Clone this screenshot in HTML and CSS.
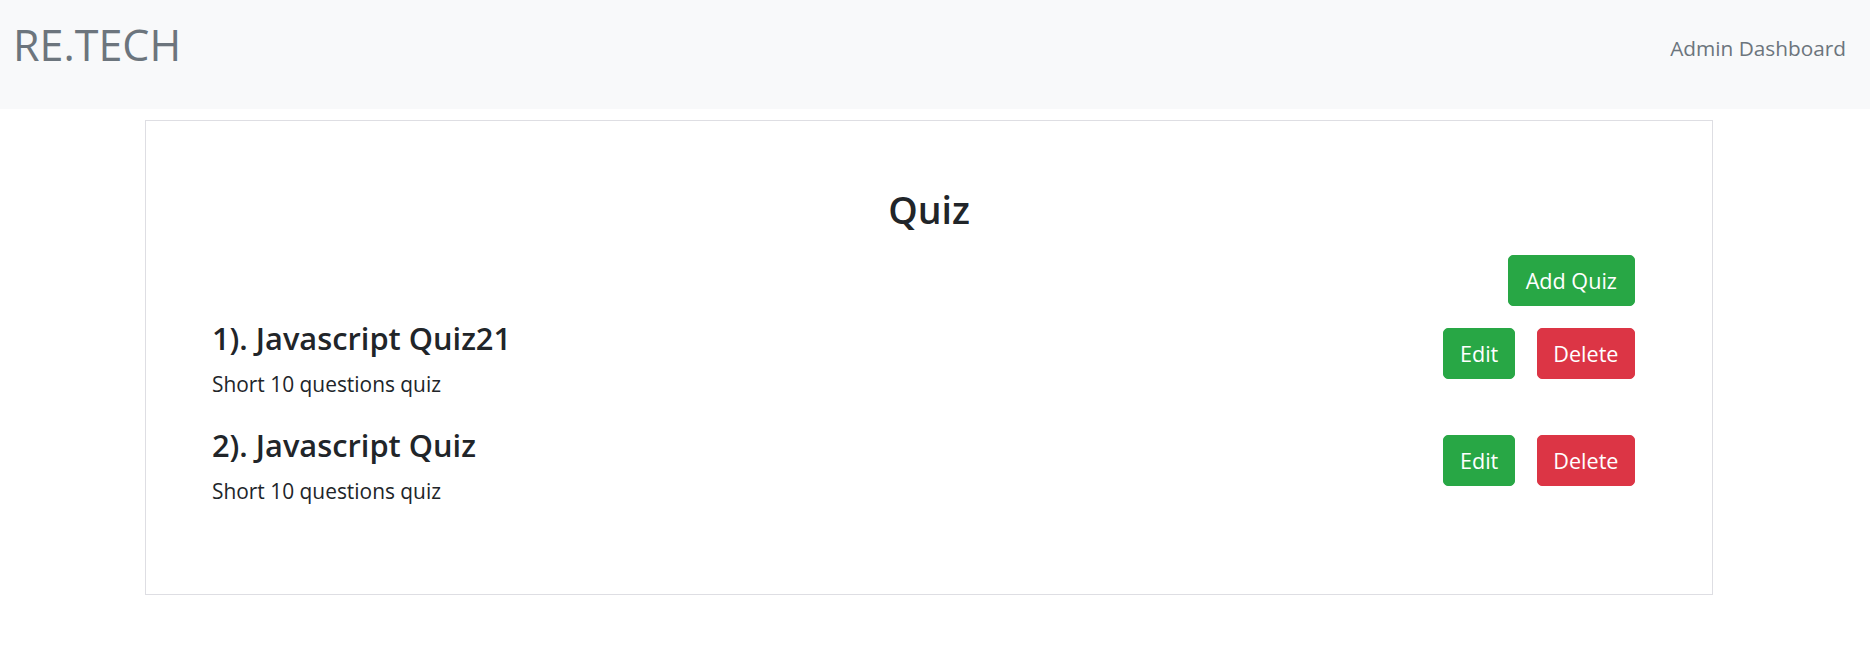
FILE: index.html
```html
<!DOCTYPE html>
<html lang="en">
<head>
<meta charset="utf-8">
<title>RE.TECH - Quiz</title>
<link rel="stylesheet" href="styles.css">
</head>
<body>
<nav class="navbar">
  <a class="brand" href="#">RE.TECH</a>
  <a class="nav-link" href="#">Admin Dashboard</a>
</nav>
<main class="page">
  <section class="card">
    <h2 class="card-title">Quiz</h2>
    <div class="toolbar">
      <button class="btn btn-success btn-wide">Add Quiz</button>
    </div>
    <div class="quiz-list">
      <div class="quiz">
        <div class="quiz-info">
          <h4 class="quiz-name">1). Javascript Quiz21</h4>
          <p class="quiz-desc">Short 10 questions quiz</p>
        </div>
        <div class="quiz-actions">
          <button class="btn btn-success">Edit</button>
          <button class="btn btn-danger">Delete</button>
        </div>
      </div>
      <div class="quiz">
        <div class="quiz-info">
          <h4 class="quiz-name">2). Javascript Quiz</h4>
          <p class="quiz-desc">Short 10 questions quiz</p>
        </div>
        <div class="quiz-actions">
          <button class="btn btn-success">Edit</button>
          <button class="btn btn-danger">Delete</button>
        </div>
      </div>
    </div>
  </section>
</main>
</body>
</html>
```

FILE: styles.css
```css
* { box-sizing: border-box; }

body {
  margin: 0;
  font-family: "Open Sans", "Noto Sans", "Liberation Sans", sans-serif;
  color: #212529;
  background: #fff;
}

.navbar {
  height: 109px;
  background: #f8f9fa;
  display: flex;
  justify-content: space-between;
  align-items: flex-start;
  padding: 0 24px 0 13px;
}

.brand {
  margin-top: 23px;
  font-size: 43px;
  font-weight: 500;
  line-height: 1;
  color: #6c757d;
  text-decoration: none;
}

.nav-link {
  margin-top: 33px;
  font-size: 20.8px;
  line-height: 1.5;
  color: #6c757d;
  text-decoration: none;
}

.page {
  padding: 11px 157px 0 145px;
}

.card {
  border: 1px solid #dedee3;
  padding: 68px 55px 88px 55px;
}

.card-title {
  margin: 0;
  text-align: center;
  font-size: 37.5px;
  font-weight: 600;
  line-height: 42px;
}

.toolbar {
  margin-top: 24px;
  padding-right: 22px;
  display: flex;
  justify-content: flex-end;
}

.btn {
  font-family: inherit;
  font-size: 21.6px;
  line-height: 31px;
  padding: 9px 15.5px;
  border: 1px solid transparent;
  border-radius: 5px;
  color: #fff;
  cursor: pointer;
}

.btn-wide { padding: 9px 17px; }

.btn-success { background: #28a745; border-color: #28a745; }
.btn-danger { background: #dc3545; border-color: #dc3545; }

.quiz-list {
  margin-top: 17px;
  padding: 0 22px 0 11px;
  display: flex;
  flex-direction: column;
  gap: 31.5px;
}

.quiz {
  display: flex;
  justify-content: space-between;
  align-items: flex-start;
}

.quiz-name {
  margin: 0;
  font-size: 30.8px;
  font-weight: 600;
  line-height: 30px;
}

.quiz-desc {
  margin: 18px 0 0;
  font-size: 20.9px;
  line-height: 27.5px;
}

.quiz-actions {
  margin-top: 5px;
  display: flex;
  gap: 22px;
}
```
